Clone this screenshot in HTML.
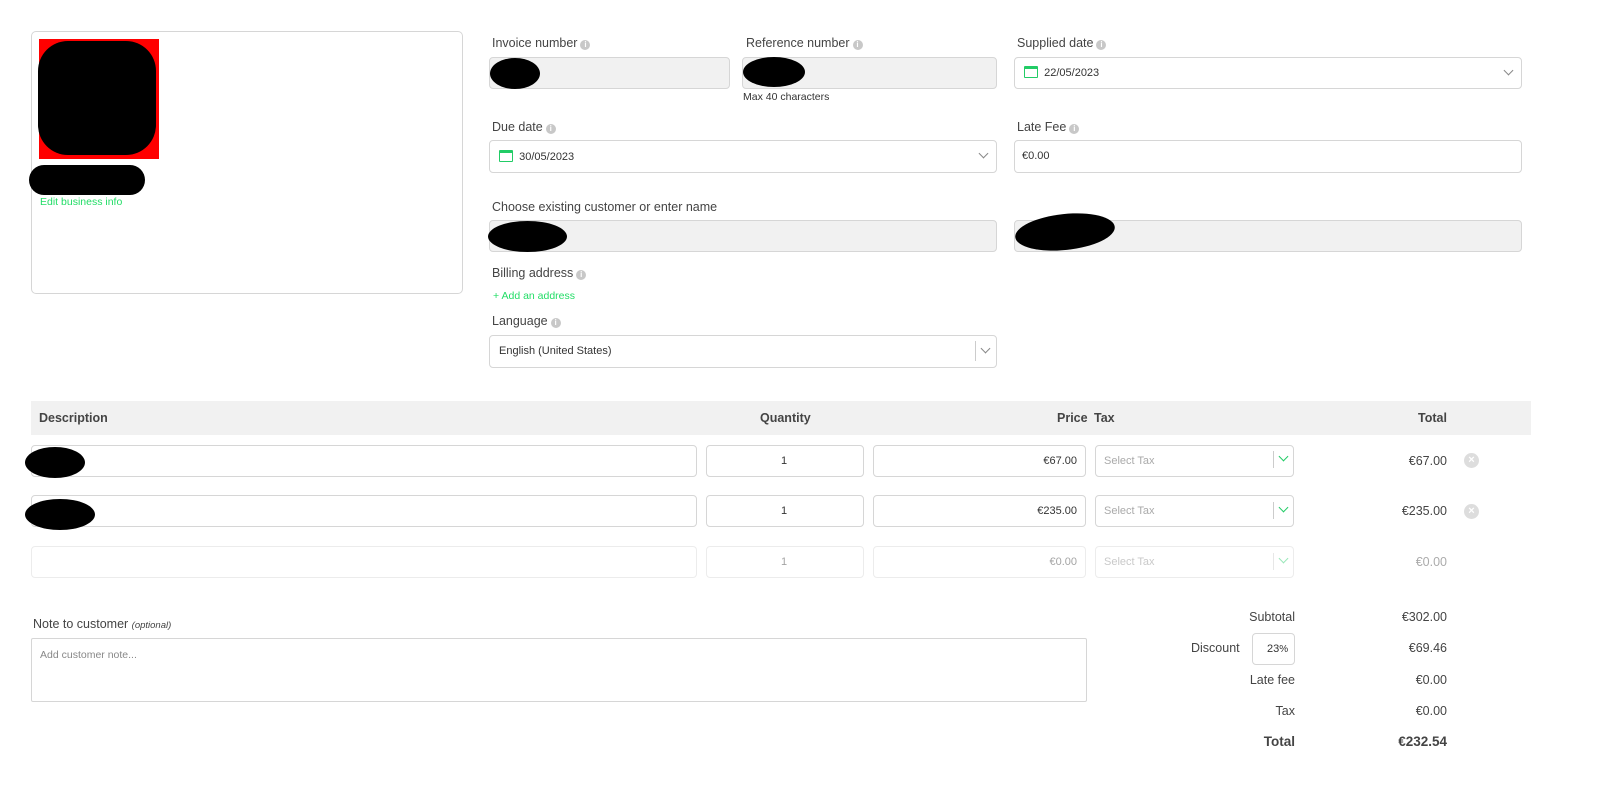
<!DOCTYPE html>
<html><head><meta charset="utf-8"><style>
*{box-sizing:border-box;margin:0;padding:0}
body{width:1599px;height:810px;background:#fff;font-family:"Liberation Sans",sans-serif;color:#444;position:relative;overflow:hidden}
.a{position:absolute}
.lbl{font-size:12.5px;color:#444;white-space:nowrap}
.box{border:1px solid #d6d6d6;border-radius:4px;background:#fff}
.grey{background:#f1f1f1}
.t{font-size:11px;color:#333;white-space:nowrap}
.i{display:inline-block;width:10px;height:10px;border-radius:50%;background:#c8c8c8;color:#fff;font-size:8px;line-height:10px;text-align:center;vertical-align:0px;margin-left:3px;font-weight:bold}
.blob{background:#000;border-radius:50%}
.g{color:#22dd66}
.cal{display:inline-block;width:14px;height:12px;border:1.5px solid #22cc66;border-top-width:3px;border-radius:1px;vertical-align:-2px}
.chev{width:7px;height:7px;border-right:1.3px solid #888;border-bottom:1.3px solid #888;transform:rotate(45deg)}
.x{width:15px;height:15px;border-radius:50%;background:#ddd;color:#fff;font-size:11px;line-height:15px;text-align:center;font-weight:bold}
.r{text-align:right}
</style></head><body>

<div class="a box" style="left:31px;top:31px;width:432px;height:263px;border-radius:5px"></div>
<div class="a" style="left:39px;top:39px;width:120px;height:120px;background:#f00"></div>
<div class="a" style="left:38px;top:41px;width:118px;height:114px;background:#000;border-radius:30px"></div>
<div class="a blob" style="left:29px;top:165px;width:116px;height:30px;border-radius:15px"></div>
<div class="a g" style="left:40px;top:196px;font-size:10.5px">Edit business info</div>

<div class="a lbl" style="left:492px;top:36px">Invoice number<span class="i">i</span></div>
<div class="a box grey" style="left:489px;top:57px;width:241px;height:32px"></div>
<div class="a blob" style="left:490px;top:58px;width:50px;height:31px"></div>

<div class="a lbl" style="left:746px;top:36px">Reference number<span class="i">i</span></div>
<div class="a box grey" style="left:742px;top:57px;width:255px;height:32px"></div>
<div class="a blob" style="left:743px;top:57px;width:62px;height:30px"></div>
<div class="a t" style="left:743px;top:91px;font-size:10.5px">Max 40 characters</div>

<div class="a lbl" style="left:1017px;top:36px">Supplied date<span class="i">i</span></div>
<div class="a box" style="left:1014px;top:57px;width:508px;height:32px"></div>
<div class="a t" style="left:1024px;top:66px"><span class="cal"></span>&nbsp; 22/05/2023</div>
<div class="a chev" style="left:1505px;top:67px"></div>

<div class="a lbl" style="left:492px;top:120px">Due date<span class="i">i</span></div>
<div class="a box" style="left:489px;top:140px;width:508px;height:33px"></div>
<div class="a t" style="left:499px;top:150px"><span class="cal"></span>&nbsp; 30/05/2023</div>
<div class="a chev" style="left:980px;top:150px"></div>

<div class="a lbl" style="left:1017px;top:120px">Late Fee<span class="i">i</span></div>
<div class="a box" style="left:1014px;top:140px;width:508px;height:33px"></div>
<div class="a t" style="left:1022px;top:150px">€0.00</div>

<div class="a lbl" style="left:492px;top:200px">Choose existing customer or enter name</div>
<div class="a box grey" style="left:489px;top:220px;width:508px;height:32px"></div>
<div class="a blob" style="left:488px;top:221px;width:79px;height:31px"></div>
<div class="a box grey" style="left:1014px;top:220px;width:508px;height:32px"></div>
<div class="a blob" style="left:1015px;top:214px;width:100px;height:36px;transform:rotate(-6deg)"></div>

<div class="a lbl" style="left:492px;top:266px">Billing address<span class="i">i</span></div>
<div class="a g" style="left:493px;top:290px;font-size:10.5px">+ Add an address</div>
<div class="a lbl" style="left:492px;top:314px">Language<span class="i">i</span></div>
<div class="a box" style="left:489px;top:335px;width:508px;height:33px"></div>
<div class="a t" style="left:499px;top:345px">English (United States)</div>
<div class="a" style="left:975px;top:341px;width:1px;height:20px;background:#ccc"></div>
<div class="a chev" style="left:982px;top:345px"></div>

<div class="a" style="left:31px;top:401px;width:1500px;height:34px;background:#f1f1f1"></div>
<div class="a lbl" style="left:39px;top:411px;font-weight:bold;font-size:12.5px">Description</div>
<div class="a lbl" style="left:760px;top:411px;font-weight:bold">Quantity</div>
<div class="a lbl" style="left:1057px;top:411px;font-weight:bold">Price</div>
<div class="a lbl" style="left:1094px;top:411px;font-weight:bold">Tax</div>
<div class="a lbl" style="left:1418px;top:411px;font-weight:bold">Total</div>

<!-- rows -->
<div class="a box" style="left:31px;top:445px;width:666px;height:32px"></div>
<div class="a blob" style="left:25px;top:447px;width:60px;height:31px"></div>
<div class="a box" style="left:706px;top:445px;width:158px;height:32px"></div>
<div class="a t" style="left:781px;top:455px">1</div>
<div class="a box" style="left:873px;top:445px;width:213px;height:32px"></div>
<div class="a t r" style="left:980px;top:455px;width:97px">€67.00</div>
<div class="a box" style="left:1095px;top:445px;width:199px;height:32px"></div>
<div class="a t" style="left:1104px;top:455px;color:#aaa">Select Tax</div>
<div class="a" style="left:1273px;top:451px;width:1px;height:17px;background:#ccc"></div>
<div class="a chev" style="left:1280px;top:453px;border-color:#22cc66"></div>
<div class="a lbl r" style="left:1350px;top:454px;width:97px">€67.00</div>
<div class="a x" style="left:1464px;top:453px">×</div>

<div class="a box" style="left:31px;top:495px;width:666px;height:32px"></div>
<div class="a blob" style="left:25px;top:499px;width:70px;height:31px"></div>
<div class="a box" style="left:706px;top:495px;width:158px;height:32px"></div>
<div class="a t" style="left:781px;top:505px">1</div>
<div class="a box" style="left:873px;top:495px;width:213px;height:32px"></div>
<div class="a t r" style="left:980px;top:505px;width:97px">€235.00</div>
<div class="a box" style="left:1095px;top:495px;width:199px;height:32px"></div>
<div class="a t" style="left:1104px;top:505px;color:#aaa">Select Tax</div>
<div class="a" style="left:1273px;top:502px;width:1px;height:17px;background:#ccc"></div>
<div class="a chev" style="left:1280px;top:504px;border-color:#22cc66"></div>
<div class="a lbl r" style="left:1350px;top:504px;width:97px">€235.00</div>
<div class="a x" style="left:1464px;top:504px">×</div>

<div style="opacity:.45">
<div class="a box" style="left:31px;top:546px;width:666px;height:32px"></div>
<div class="a box" style="left:706px;top:546px;width:158px;height:32px"></div>
<div class="a t" style="left:781px;top:556px">1</div>
<div class="a box" style="left:873px;top:546px;width:213px;height:32px"></div>
<div class="a t r" style="left:980px;top:556px;width:97px">€0.00</div>
<div class="a box" style="left:1095px;top:546px;width:199px;height:32px"></div>
<div class="a t" style="left:1104px;top:556px;color:#888">Select Tax</div>
<div class="a" style="left:1273px;top:553px;width:1px;height:17px;background:#ccc"></div>
<div class="a chev" style="left:1280px;top:555px;border-color:#22cc66"></div>
<div class="a lbl r" style="left:1350px;top:555px;width:97px">€0.00</div>
</div>

<div class="a lbl" style="left:33px;top:617px">Note to customer <i style="font-size:9.5px">(optional)</i></div>
<div class="a box" style="left:31px;top:638px;width:1056px;height:64px;border-radius:2px"></div>
<div class="a t" style="left:40px;top:649px;color:#888;font-size:10.5px">Add customer note...</div>

<div class="a lbl r" style="left:1195px;top:610px;width:100px">Subtotal</div>
<div class="a lbl r" style="left:1347px;top:610px;width:100px">€302.00</div>
<div class="a lbl" style="left:1191px;top:641px">Discount</div>
<div class="a box" style="left:1252px;top:633px;width:43px;height:32px"></div>
<div class="a t" style="left:1267px;top:643px">23<span style="font-size:10px">%</span></div>
<div class="a lbl r" style="left:1347px;top:641px;width:100px">€69.46</div>
<div class="a lbl r" style="left:1195px;top:673px;width:100px">Late fee</div>
<div class="a lbl r" style="left:1347px;top:673px;width:100px">€0.00</div>
<div class="a lbl r" style="left:1195px;top:704px;width:100px">Tax</div>
<div class="a lbl r" style="left:1347px;top:704px;width:100px">€0.00</div>
<div class="a lbl r" style="left:1195px;top:734px;width:100px;font-weight:bold;font-size:13.5px">Total</div>
<div class="a lbl r" style="left:1347px;top:734px;width:100px;font-weight:bold;font-size:13.5px">€232.54</div>
</body></html>
